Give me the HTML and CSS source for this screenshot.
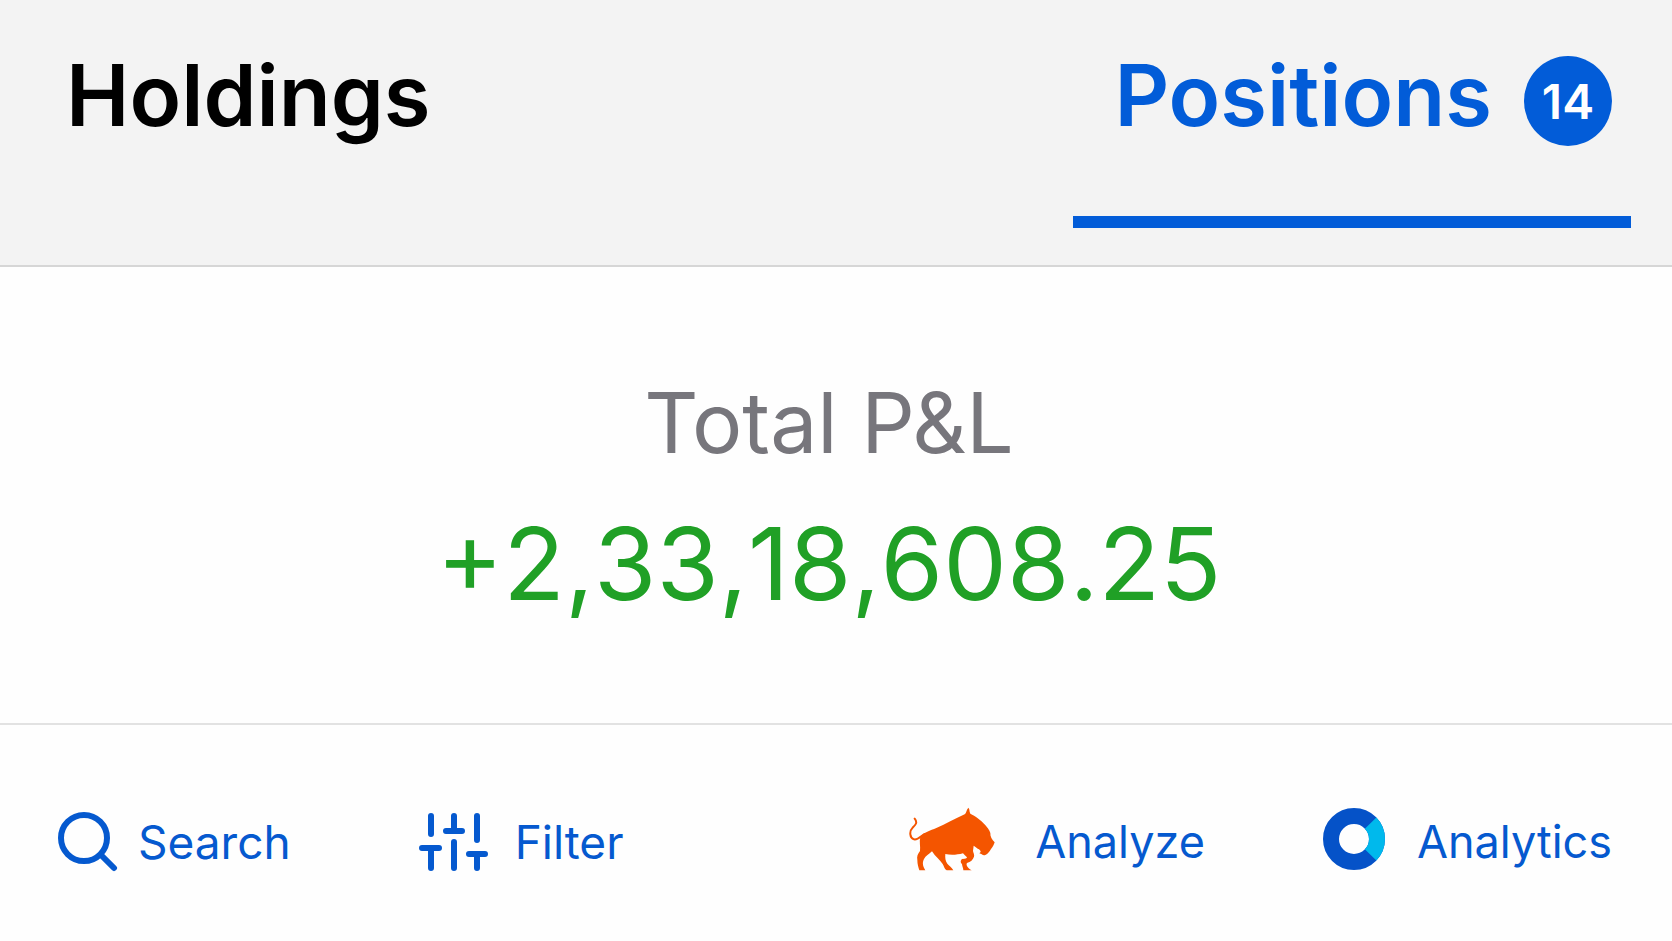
FILE: index.html
```html
<!DOCTYPE html>
<html lang="en">
<head>
    <meta charset="UTF-8">
    <meta name="viewport" content="width=device-width, initial-scale=1.0">
    <title>Positions</title>
    <link rel="stylesheet" href="styles.css">
</head>
<body>
    <nav class="tabs">
        <button type="button" class="tab">Holdings</button>
        <button type="button" class="tab active">Positions <span class="badge">14</span></button>
    </nav>

    <main class="summary">
        <div class="summary-label">Total P&amp;L</div>
        <div class="summary-value">+2,33,18,608.25</div>
    </main>

    <div class="toolbar">
        <div class="toolbar-group left">
            <button type="button" class="tool search">
                <svg width="60" height="60" viewBox="0 0 60 60" fill="none" stroke="currentColor" stroke-width="6" stroke-linecap="round">
                    <circle cx="26" cy="26" r="23"/>
                    <path d="M43 43 56 56"/>
                </svg>
                Search
            </button>
            <button type="button" class="tool">
                <svg width="70" height="60" viewBox="0 0 70 60" fill="none" stroke="currentColor" stroke-width="6" stroke-linecap="round">
                    <path d="M12 4V22M12 36V56M3 36H20M35 4V18M27 19H43M35 30V56M58 4V28M58 42V56M50 42H66"/>
                </svg>
                Filter
            </button>
        </div>
        <div class="toolbar-group right">
            <button type="button" class="tool analyze">
                <!-- bull -->
                <svg width="86" height="64" viewBox="54 49 258 192">
                    <path fill="none" stroke="#f45500" stroke-width="6" stroke-linecap="round" d="M71 84C81 96 73 103 65 111C54 122 56 142 69 146C80 149 88 138 100 130"/>
                    <path fill="#f45500" d="M88 138C98 126 118 119 136 112C164 100 195 83 221 71C226 67 226 58 232 51C237 55 234 62 238 69C252 76 271 89 282 102C287 108 296 118 298 127C297 137 303 147 311 155C308 164 305 170 300 175C295 183 291 190 283 193C275 196 272 189 265 188C271 184 270 181 264 176C259 175 254 168 248 165L246 181C247 187 251 192 249 198C246 207 239 214 228 217C224 223 230 232 242 239H217C217 232 214 229 213 221C209 216 207 213 212 206C217 204 227 205 228 200C224 196 219 192 216 188C198 193 178 194 163 190C162 201 163 211 169 219C174 226 183 230 187 239H167C161 236 159 227 155 220C147 208 133 198 123 182C114 190 104 196 99 205C94 215 94 224 103 239H85C82 230 79 220 79 208C77 198 80 190 87 181C89 167 84 153 88 138Z"/>
                </svg>
                Analyze
            </button>
            <button type="button" class="tool analytics">
                <svg width="62" height="64" viewBox="0 0 62 64" fill="none" stroke-width="16">
                    <circle cx="31" cy="32" r="23" stroke="#0552c8"/>
                    <path stroke="#00b9ec" d="M47.600 16.100A23 23 0 0 1 47.600 47.900"/>
                </svg>
                Analytics
            </button>
        </div>
    </div>
</body>
</html>
```
FILE: styles.css
```css
body {
    margin: 0;
    background: #fefefe;
    color: #000;
    font-family: Inter, "Liberation Sans", sans-serif;
}
button {
    display: flex;
    align-items: center;
    margin: 0;
    padding: 0;
    background: none;
    border: none;
    font-family: inherit;
    cursor: pointer;
}
svg {
    flex: none;
}
.tabs {
    display: flex;
    justify-content: space-between;
    padding: 0 41px 37px 66px;
    background: #f3f3f3;
    border-bottom: 2px solid #d6d6d6;
}
.tab {
    padding: 40px 0 64px;
    border-bottom: 12px solid transparent;
    color: #000;
    font-size: 85px;
    line-height: 112px;
    font-weight: 600;
}
.tab.active {
    gap: 32px;
    padding-left: 41px;
    padding-right: 19px;
    border-color: #025cd8;
    color: #025cd8;
}
.badge {
    width: 88px;
    height: 90px;
    margin-top: 10px;
    border-radius: 50%;
    background: #025cd8;
    color: #fff;
    font-size: 48px;
    line-height: 92px;
    text-align: center;
}
.summary {
    padding: 96px 14px 88px 0;
    text-align: center;
}
.summary-label {
    color: #77767c;
    font-size: 84px;
    line-height: 120px;
}
.summary-value {
    margin-top: 8px;
    color: #20a026;
    font-size: 101px;
    line-height: 144px;
    font-kerning: none;
}
.toolbar {
    display: flex;
    justify-content: space-between;
    padding: 82px 60px 66px 58px;
    border-top: 2px solid #e2e2e2;
}
.toolbar-group {
    display: flex;
}
.left {
    gap: 128px;
}
.right {
    gap: 118px;
}
.right svg {
    margin-bottom: 6px;
}
.tool {
    gap: 26px;
    color: #0559cf;
    font-size: 46px;
    line-height: 68px;
}
.search {
    gap: 20px;
}
.analyze {
    gap: 40px;
}
.analytics {
    gap: 32px;
}
.right .tool {
    font-size: 45px;
}
```
